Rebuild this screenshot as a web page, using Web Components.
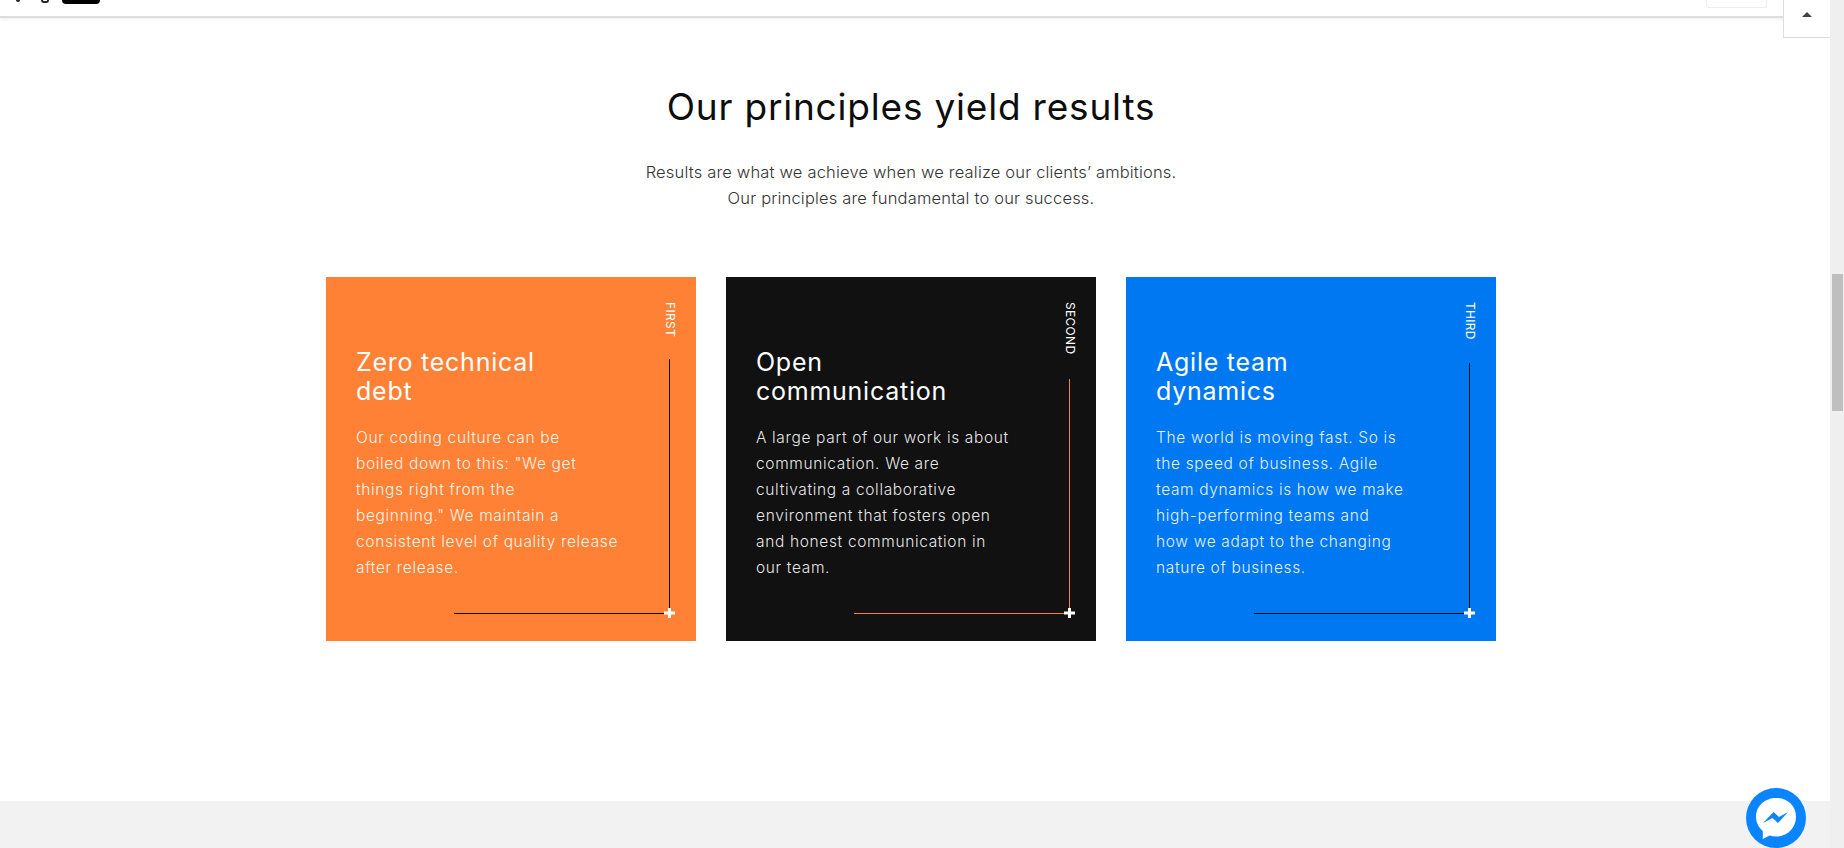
<!DOCTYPE html>
<html>
<head>
<meta charset="utf-8">
<title>Principles</title>
<style>
	html, body { margin: 0; height: 100%; overflow: hidden; background: #fff; }
	body { font-family: "Inter", "Noto Sans", sans-serif; }
</style>
</head>
<body>
<principles-page>
	<section-heading slot="heading" title="Our principles yield results">
		<div>Results are what we achieve when we realize our clients’ ambitions.</div>
		<div>Our principles are fundamental to our success.</div>
	</section-heading>
	<principle-card slot="cards" label="FIRST" color="#ff8136" line="#000" drop="82">
		<span slot="title">Zero technical<br>debt</span>
		Our coding culture can be<br>boiled down to this: "We get<br>things right from the<br>beginning." We maintain a<br>consistent level of quality release<br>after release.
	</principle-card>
	<principle-card slot="cards" label="SECOND" color="#111111" line="#ff8136" drop="102">
		<span slot="title">Open<br>communication</span>
		A large part of our work is about<br>communication. We are<br>cultivating a collaborative<br>environment that fosters open<br>and honest communication in<br>our team.
	</principle-card>
	<principle-card slot="cards" label="THIRD" color="#0078f2" line="#000" drop="86">
		<span slot="title">Agile team<br>dynamics</span>
		The world is moving fast. So is<br>the speed of business. Agile<br>team dynamics is how we make<br>high-performing teams and<br>how we adapt to the changing<br>nature of business.
	</principle-card>
</principles-page>
<script>
customElements.define("section-heading",
	class extends HTMLElement {
		connectedCallback(){
			this.attachShadow({ mode: "open" }).innerHTML = `
				<style>
					:host { display: block; text-align: center; }
					h2 { margin: 0; font-size: 37px; line-height: 44px; font-weight: 400; color: #0d0d0d; letter-spacing: 0.8px; }
					div { margin-top: 30px; font-size: 16.5px; line-height: 26px; font-weight: 300; color: #333; letter-spacing: 0.18px; }
				</style>
				<h2>${this.getAttribute("title")}</h2>
				<div><slot></slot></div>
			`;
		}
	}
);
customElements.define("principle-card",
	class extends HTMLElement {
		connectedCallback(){
			const drop = this.getAttribute("drop");
			this.attachShadow({ mode: "open" }).innerHTML = `
				<style>
					:host { display: block; position: relative; box-sizing: border-box; width: 370px; height: 364px; padding: 70px 30px 0; color: #fff; background: ${this.getAttribute("color")}; }
					h3 { margin: 0; padding-top: 1px; font-size: 25px; line-height: 29px; font-weight: 400; letter-spacing: 0.75px; }
					p { margin: 19px 0 0; font-size: 15.5px; line-height: 26px; font-weight: 300; letter-spacing: 0.65px; white-space: nowrap; color: rgba(255,255,255,.92); }
					.label { position: absolute; top: 25px; right: 19px; writing-mode: vertical-rl; font-size: 12px; line-height: 14px; letter-spacing: 0.3px; }
					.down { position: absolute; right: 26px; width: 1px; top: ${drop}px; bottom: 27px; background: ${this.getAttribute("line")}; }
					.across { position: absolute; right: 26px; width: 216px; height: 1px; bottom: 27px; background: ${this.getAttribute("line")}; }
					svg { position: absolute; right: 21px; bottom: 23px; }
				</style>
				<h3><slot name="title"></slot></h3>
				<p><slot></slot></p>
				<span class="label">${this.getAttribute("label")}</span>
				<span class="down"></span>
				<span class="across"></span>
				<svg width="11" height="10" viewBox="0 0 11 10"><path d="M4 0h3v3.500h4v3H7V10H4V6.500H0v-3h4z" fill="#fff"/></svg>
			`;
		}
	}
);
customElements.define("principles-page",
	class extends HTMLElement {
		connectedCallback(){
			this.attachShadow({ mode: "open" }).innerHTML = `
				<style>
					:host { display: flex; flex-direction: column; height: 848px; position: relative; overflow: hidden; background: #fff; }
					.bar { flex: none; display: flex; align-items: flex-start; height: 18px; box-sizing: border-box; background: #fff; border-bottom: 2px solid #ddd; box-shadow: 0 1px 3px rgba(0,0,0,.08); }
					.tail { flex: none; width: 4px; height: 2px; margin-left: 16px; background: #222; border-radius: 0 0 2px 2px; }
					.hook { flex: none; width: 4px; height: 1px; margin-left: 21px; border: 2px solid #222; border-top: 0; border-radius: 0 0 4px 4px; }
					.badge { flex: none; width: 38px; height: 4px; margin-left: 13px; background: #000; border-radius: 0 0 5px 5px; }
					.action { flex: none; width: 61px; height: 8px; box-sizing: border-box; margin-left: auto; margin-right: 77px; border: 1px solid #eee; border-top: 0; border-radius: 0 0 3px 3px; }
					main { flex: 1; padding: 67px 22px 0 0; }
					.cards { display: flex; justify-content: center; gap: 30px; margin-top: 66px; }
					.band { flex: none; height: 47px; background: #f2f2f2; margin-right: 14px; }
					.scroll { position: absolute; top: 0; right: 0; bottom: 0; width: 14px; background: #efefef; }
					.thumb { position: absolute; top: 274px; left: 2px; right: 1px; height: 137px; background: #bfbfbf; }
					.top { position: absolute; top: 0; right: 14px; width: 47px; height: 38px; box-sizing: border-box; background: #fff; border: 1px solid #ddd; border-width: 0 0 1px 1px; }
					.top i { position: absolute; left: 18px; top: 12px; border: 5px solid transparent; border-top: 0; border-bottom: 5px solid #444; }
					.chat { position: absolute; left: 1746px; top: 788px; width: 60px; height: 60px; border-radius: 50%; background: #0a84ff; }
				</style>
				<div class="bar">
					<span class="tail"></span>
					<span class="hook"></span>
					<span class="badge"></span>
					<span class="action"></span>
				</div>
				<main>
					<slot name="heading"></slot>
					<div class="cards"><slot name="cards"></slot></div>
				</main>
				<div class="band"></div>
				<div class="scroll"><div class="thumb"></div></div>
				<div class="top"><i></i></div>
				<div class="chat">
					<svg width="60" height="60" viewBox="0 0 60 60">
						<path d="M30 10c-11 0-20 8-20 18.800 0 5.700 2.600 10.700 6.800 14.100V51l6.800-3.400c2 .6 4.100.9 6.400.9 11 0 20-8 20-19.700S41 10 30 10z" fill="#fff"/>
						<path d="M17 35l10.500-11 5.500 5 9-5-10 11-5.500-5z" fill="#0a84ff"/>
					</svg>
				</div>
			`;
		}
	}
);
</script>
</body>
</html>
